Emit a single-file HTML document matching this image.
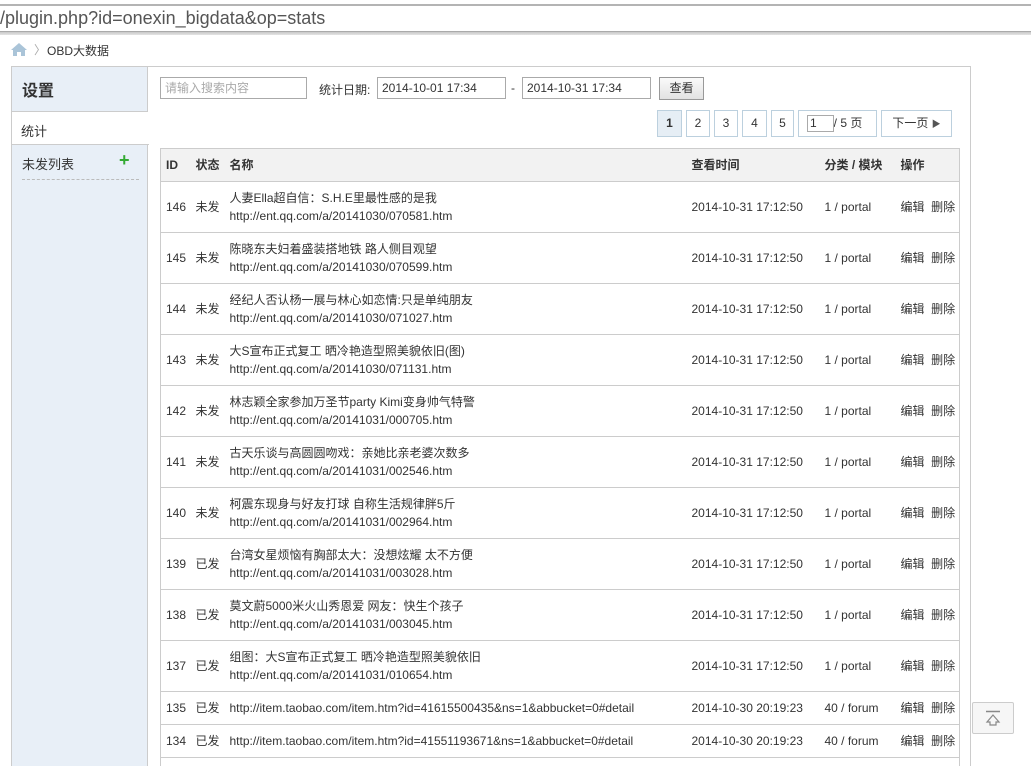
<!DOCTYPE html>
<html><head><meta charset="utf-8"><style>
*{margin:0;padding:0;box-sizing:border-box}
html,body{width:1031px;height:766px;overflow:hidden}
body{background:#fff;font-family:"Liberation Sans","Noto Sans CJK SC",sans-serif;font-size:12px;color:#333;position:relative}
.a{position:absolute}
#url{left:0;top:4px;width:1031px;height:27px;border-top:2px solid #b4b4b4;font-size:18px;color:#555;line-height:24px;padding-left:0}
#urlb{left:0;top:31px;width:1031px;height:4px;background:linear-gradient(#c8c8c8,#e4e4e4);border-top:1px solid #aaa}
#box{left:11px;top:66px;width:960px;height:700px;border:1px solid #ccc;border-bottom:none}
#side{left:12px;top:67px;width:136px;height:699px;background:#e8eff7;border-right:1px solid #ccc}
.inp{position:absolute;border:1px solid #aaa;height:22px;font-size:12px;line-height:20px;padding-left:4px;background:#fff}
.pg{position:absolute;top:110px;height:27px;border:1px solid #bcd0de;text-align:center;line-height:25px;font-size:12px;background:#fff}
table{position:absolute;left:160px;top:148px;width:800px;border-collapse:collapse;border:1px solid #ccc;border-bottom:none}
td,th{border-bottom:1px solid #ccc;padding:0 0 0 5px;text-align:left;vertical-align:middle;line-height:18px;white-space:nowrap}
th{background:#f2f2f2;height:33px;font-weight:bold}
tr.t td{height:51px}
tr.s td{height:33px}
tr.e td{height:8px;line-height:8px;border-bottom:none}
</style></head><body>
<div id="url" class="a">/plugin.php?id=onexin_bigdata&amp;op=stats</div>
<div id="urlb" class="a"></div>
<svg class="a" style="left:11px;top:43px" width="16" height="13" viewBox="0 0 16 13"><path d="M8 0L0 7h2v6h4V9h4v4h4V7h2z" fill="#aac4d8"/></svg>
<div class="a" style="left:34px;top:41px;color:#aaa;font-size:12px">〉</div>
<div class="a" style="left:47px;top:42px;font-size:12px">OBD大数据</div>
<div id="box" class="a"></div>
<div id="side" class="a"></div>
<div class="a" style="left:12px;top:111px;width:136px;height:1px;background:#ccc"></div>
<div class="a" style="left:12px;top:112px;width:137px;height:33px;background:#fff;border-bottom:1px solid #ccc"></div>
<div class="a" style="left:22px;top:77px;font-size:16px;font-weight:bold">设置</div>
<div class="a" style="left:21px;top:121px;font-size:13px">统计</div>
<div class="a" style="left:22px;top:154px;font-size:13px">未发列表</div>
<div class="a" style="left:119px;top:153px;color:#3a3;font-size:18px;font-weight:bold;line-height:14px">+</div>
<div class="a" style="left:22px;top:179px;width:117px;border-top:1px dashed #bbb"></div>
<div class="inp" style="left:160px;top:77px;width:147px;color:#aaa">请输入搜索内容</div>
<div class="a" style="left:319px;top:81px">统计日期:</div>
<div class="inp" style="left:377px;top:77px;width:129px">2014-10-01 17:34</div>
<div class="a" style="left:511px;top:81px">-</div>
<div class="inp" style="left:522px;top:77px;width:129px">2014-10-31 17:34</div>
<div class="a" style="left:659px;top:77px;width:45px;height:23px;border:1px solid #999;background:linear-gradient(#fafafa,#e2e2e2);text-align:center;line-height:21px">查看</div>
<div class="pg" style="left:657px;width:25px;background:#e6eef5;font-weight:bold">1</div>
<div class="pg" style="left:686px;width:24px">2</div>
<div class="pg" style="left:714px;width:24px">3</div>
<div class="pg" style="left:742px;width:25px">4</div>
<div class="pg" style="left:771px;width:23px">5</div>
<div class="pg" style="left:798px;width:79px;text-align:left;padding-left:8px">&nbsp;&nbsp;&nbsp;&nbsp;&nbsp;&nbsp;&nbsp;&nbsp;/ 5 页</div>
<div class="a" style="left:807px;top:115px;width:27px;height:17px;border:1px solid #aaa;line-height:15px;padding-left:2px">1</div>
<div class="pg" style="left:881px;width:71px">下一页 <span style="font-size:9px;color:#555">▶</span></div>
<table>
<tr><th style="width:30px">ID</th><th style="width:34px">状态</th><th style="width:462px">名称</th><th style="width:133px">查看时间</th><th style="width:76px">分类 / 模块</th><th>操作</th></tr>
<tr class="t"><td>146</td><td>未发</td><td>人妻Ella超自信：S.H.E里最性感的是我<br>http://ent.qq.com/a/20141030/070581.htm</td><td>2014-10-31 17:12:50</td><td>1 / portal</td><td>编辑&nbsp;&nbsp;删除</td></tr>
<tr class="t"><td>145</td><td>未发</td><td>陈晓东夫妇着盛装搭地铁 路人侧目观望<br>http://ent.qq.com/a/20141030/070599.htm</td><td>2014-10-31 17:12:50</td><td>1 / portal</td><td>编辑&nbsp;&nbsp;删除</td></tr>
<tr class="t"><td>144</td><td>未发</td><td>经纪人否认杨一展与林心如恋情:只是单纯朋友<br>http://ent.qq.com/a/20141030/071027.htm</td><td>2014-10-31 17:12:50</td><td>1 / portal</td><td>编辑&nbsp;&nbsp;删除</td></tr>
<tr class="t"><td>143</td><td>未发</td><td>大S宣布正式复工 晒冷艳造型照美貌依旧(图)<br>http://ent.qq.com/a/20141030/071131.htm</td><td>2014-10-31 17:12:50</td><td>1 / portal</td><td>编辑&nbsp;&nbsp;删除</td></tr>
<tr class="t"><td>142</td><td>未发</td><td>林志颖全家参加万圣节party Kimi变身帅气特警<br>http://ent.qq.com/a/20141031/000705.htm</td><td>2014-10-31 17:12:50</td><td>1 / portal</td><td>编辑&nbsp;&nbsp;删除</td></tr>
<tr class="t"><td>141</td><td>未发</td><td>古天乐谈与高圆圆吻戏：亲她比亲老婆次数多<br>http://ent.qq.com/a/20141031/002546.htm</td><td>2014-10-31 17:12:50</td><td>1 / portal</td><td>编辑&nbsp;&nbsp;删除</td></tr>
<tr class="t"><td>140</td><td>未发</td><td>柯震东现身与好友打球 自称生活规律胖5斤<br>http://ent.qq.com/a/20141031/002964.htm</td><td>2014-10-31 17:12:50</td><td>1 / portal</td><td>编辑&nbsp;&nbsp;删除</td></tr>
<tr class="t"><td>139</td><td>已发</td><td>台湾女星烦恼有胸部太大：没想炫耀 太不方便<br>http://ent.qq.com/a/20141031/003028.htm</td><td>2014-10-31 17:12:50</td><td>1 / portal</td><td>编辑&nbsp;&nbsp;删除</td></tr>
<tr class="t"><td>138</td><td>已发</td><td>莫文蔚5000米火山秀恩爱 网友：快生个孩子<br>http://ent.qq.com/a/20141031/003045.htm</td><td>2014-10-31 17:12:50</td><td>1 / portal</td><td>编辑&nbsp;&nbsp;删除</td></tr>
<tr class="t"><td>137</td><td>已发</td><td>组图：大S宣布正式复工 晒冷艳造型照美貌依旧<br>http://ent.qq.com/a/20141031/010654.htm</td><td>2014-10-31 17:12:50</td><td>1 / portal</td><td>编辑&nbsp;&nbsp;删除</td></tr>
<tr class="s"><td>135</td><td>已发</td><td>http://item.taobao.com/item.htm?id=41615500435&amp;ns=1&amp;abbucket=0#detail</td><td>2014-10-30 20:19:23</td><td>40 / forum</td><td>编辑&nbsp;&nbsp;删除</td></tr>
<tr class="s"><td>134</td><td>已发</td><td>http://item.taobao.com/item.htm?id=41551193671&amp;ns=1&amp;abbucket=0#detail</td><td>2014-10-30 20:19:23</td><td>40 / forum</td><td>编辑&nbsp;&nbsp;删除</td></tr>
<tr class="e"><td></td><td></td><td></td><td></td><td></td><td></td></tr>
</table>
<div class="a" style="left:972px;top:702px;width:42px;height:32px;border:1px solid #ccc;border-radius:2px;background:#f6f6f6"></div>
<svg class="a" style="left:985px;top:710px" width="16" height="16" viewBox="0 0 16 16"><path d="M1 1.5h14" stroke="#888" stroke-width="1.5"/><path d="M8 5L2 12h3v3h6v-3h3z" fill="none" stroke="#888" stroke-width="1.2"/></svg>
</body></html>
